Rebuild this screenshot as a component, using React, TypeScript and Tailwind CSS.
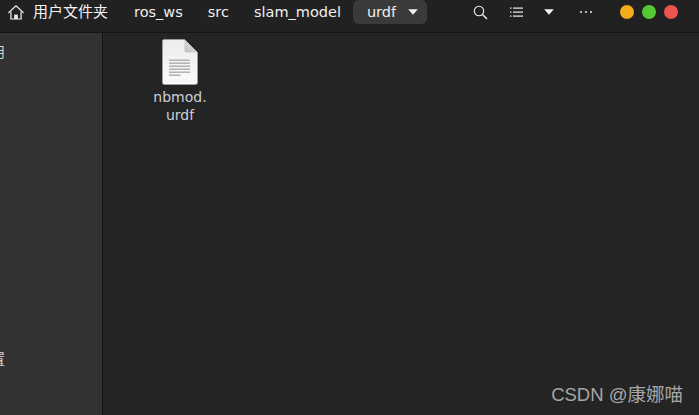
import React from "react";

const sans = '"DejaVu Sans", "Noto Sans CJK SC", sans-serif';

function Home() {
  return (
    <svg width="16" height="15" viewBox="0 0 16 15" fill="none" className="shrink-0">
      <path d="M0.7 7.6 L8 0.8 L15.3 7.6" stroke="#f2f2f2" strokeWidth="1.2" strokeLinecap="round" strokeLinejoin="round" />
      <path d="M2.9 6.4 V14 H13.1 V6.4" stroke="#f2f2f2" strokeWidth="1.2" />
      <rect x="6.2" y="9.6" width="3.6" height="4.4" fill="#f2f2f2" />
    </svg>
  );
}

function Caret() {
  return (
    <svg width="10" height="6" viewBox="0 0 10 6" className="shrink-0">
      <path d="M0.2 0.3 H9.8 L5 5.7 Z" fill="#f4f4f4" />
    </svg>
  );
}

function FileIcon() {
  return (
    <svg width="36" height="46" viewBox="0 0 36 46" className="shrink-0">
      <defs>
        <linearGradient id="page" x1="0" y1="0" x2="0" y2="1">
          <stop offset="0" stopColor="#ececec" />
          <stop offset="1" stopColor="#fafafa" />
        </linearGradient>
        <linearGradient id="fold" x1="0" y1="1" x2="1" y2="0">
          <stop offset="0" stopColor="#bdbdbd" />
          <stop offset="1" stopColor="#ececec" />
        </linearGradient>
      </defs>
      <path d="M2 0.5 H22.5 L35.5 13.5 V43.5 Q35.5 45.5 33.5 45.5 H2 Q0.5 45.5 0.5 43.5 V2 Q0.5 0.5 2 0.5 Z" fill="url(#page)" stroke="#a8a8a8" strokeWidth="0.6" />
      <path d="M22.5 0.5 V11 Q22.5 13.5 25 13.5 H35.5 Z" fill="url(#fold)" />
      {[20.5, 23.5, 26.5, 29.5, 32.5].map((y) => (
        <rect key={y} x="7" y={y} width="21" height="1.4" fill="#adadad" />
      ))}
      <rect x="7" y="35.5" width="11.5" height="1.4" fill="#adadad" />
    </svg>
  );
}

export default function App() {
  return (
    <div className="flex h-[415px] w-[699px] flex-col overflow-hidden bg-[#242424]" style={{ fontFamily: sans }}>
      <header className="flex h-[33px] shrink-0 items-center border-b border-[#141414] bg-[#212121] pb-[8px] text-[14.5px] leading-none text-[#f0f0f0]">
        <div className="ml-[8px] flex items-center">
          <Home />
          <span className="ml-[9px] text-[15px] text-[#f2f2f2]">用户文件夹</span>
        </div>
        <span className="ml-[26px]">ros_ws</span>
        <span className="ml-[25px]">src</span>
        <span className="ml-[25px]">slam_model</span>
        <div className="ml-[12px] flex h-[24px] w-[74px] items-center rounded-md bg-[#3a3a3a] pl-[14px]">
          <span>urdf</span>
          <span className="ml-[12px] flex"><Caret /></span>
        </div>
        <div className="ml-[46px] flex items-center">
          <svg width="15" height="15" viewBox="0 0 15 15" fill="none">
            <circle cx="6" cy="6" r="4.7" stroke="#f0f0f0" strokeWidth="1.1" />
            <path d="M9.5 9.5 L14 14" stroke="#f0f0f0" strokeWidth="1.4" />
          </svg>
          <svg width="13" height="10" viewBox="0 0 13 10" className="ml-[22px]">
            {[0.5, 4.5, 8.5].map((y) => (
              <g key={y}>
                <rect x="0" y={y} width="1.5" height="1.2" fill="#f0f0f0" />
                <rect x="3" y={y} width="10" height="1.2" fill="#f0f0f0" />
              </g>
            ))}
          </svg>
          <span className="ml-[21px] flex"><Caret /></span>
          <div className="ml-[26px] flex gap-[3px]">
            <span className="h-[2px] w-[2px] rounded-full bg-[#e8e8e8]" />
            <span className="h-[2px] w-[2px] rounded-full bg-[#e8e8e8]" />
            <span className="h-[2px] w-[2px] rounded-full bg-[#e8e8e8]" />
          </div>
        </div>
        <div className="ml-[28px] flex gap-[8px]">
          <span className="h-[14px] w-[14px] rounded-full bg-[#f4ab1c]" />
          <span className="h-[14px] w-[14px] rounded-full bg-[#54c834]" />
          <span className="h-[14px] w-[14px] rounded-full bg-[#ef5350]" />
        </div>
      </header>
      <div className="flex min-h-0 flex-1">
        <aside className="flex w-[103px] shrink-0 flex-col overflow-hidden border-r border-[#161616] bg-[#323232] text-[14px] leading-none text-[#d8d8d8]">
          <span className="ml-[-9px] mt-[12px] w-[14px]">用</span>
          <span className="ml-[-9px] mt-[293px] w-[14px]">置</span>
        </aside>
        <main className="relative flex-1">
          <div className="ml-[24px] mt-[6px] flex w-[106px] flex-col items-center">
            <FileIcon />
            <div className="mt-[3px] text-center text-[14px] leading-[18px] text-[#c9d0d8]">
              nbmod.
              <br />
              urdf
            </div>
          </div>
          <span className="absolute bottom-[11px] right-[16px] text-[18.5px] leading-none text-[#a6a6a6]" style={{ fontFamily: '"Liberation Sans", "Noto Sans CJK SC", sans-serif' }}>
            CSDN @康娜喵
          </span>
        </main>
      </div>
    </div>
  );
}
